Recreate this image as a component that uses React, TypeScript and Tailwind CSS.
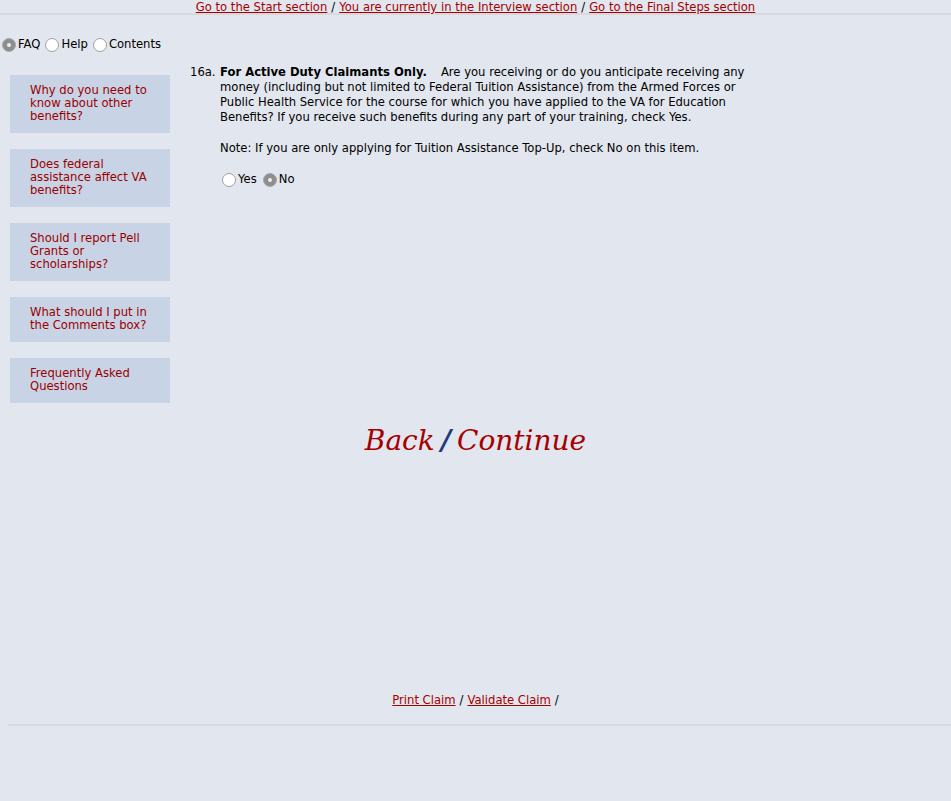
import { useState } from 'react'

const faqs = [
  'Why do you need to know about other benefits?',
  'Does federal assistance affect VA benefits?',
  'Should I report Pell Grants or scholarships?',
  'What should I put in the Comments box?',
  'Frequently Asked Questions',
]

const Radio = ({ checked }: { checked: boolean }) => (
  <span
    className={
      'inline-flex items-center justify-center w-[14px] h-[14px] rounded-full border ' +
      (checked ? 'bg-[#8e8e8e] border-[#a8a8a8]' : 'bg-white border-[#a0a0a0]')
    }
  >
    {checked && <span className="w-[4px] h-[4px] rounded-full bg-[#eeeeee]" />}
  </span>
)

export default function App() {
  const [panel, setPanel] = useState('FAQ')
  const [answer, setAnswer] = useState('No')

  return (
    <div className="min-h-[801px] bg-[#e2e6ee] text-[11.6px] text-black font-['DejaVu_Sans',sans-serif]">
      {/* Top section links */}
      <div className="flex justify-center h-[15px] leading-[14px] border-b-2 border-[#d6d9de]">
        <a href="#" className="text-[#a50000] underline">Go to the Start section</a>
        <span className="mx-[4px]">/</span>
        <a href="#" className="text-[#a50000] underline">You are currently in the Interview section</a>
        <span className="mx-[4px]">/</span>
        <a href="#" className="text-[#a50000] underline">Go to the Final Steps section</a>
      </div>

      <div className="flex">
        {/* Sidebar */}
        <div className="w-[180px] shrink-0">
          <div className="flex items-center mt-[22px] ml-[2px] h-[16px]">
            {['FAQ', 'Help', 'Contents'].map((p) => (
              <label key={p} className="flex items-center mr-[5px] cursor-pointer" onClick={() => setPanel(p)}>
                <Radio checked={panel === p} />
                <span className="ml-[2px]">{p}</span>
              </label>
            ))}
          </div>
          <div className="flex flex-col gap-[16px] mt-[22px] ml-[10px]">
            {faqs.map((q) => (
              <div key={q} className="w-[160px] bg-[#c8d3e5] pl-[20px] pr-[14px] pt-[9px] pb-[10px] leading-[13px]">
                <a href="#" className="text-[#9b0000]">{q}</a>
              </div>
            ))}
          </div>
        </div>

        {/* Question */}
        <div className="flex-1 pl-[10px] pt-[50px]">
          <div className="flex leading-[15px] w-[560px]">
            <span className="w-[30px] shrink-0">16a.</span>
            <div>
              <p>
                <b className="mr-[14px]">For Active Duty Claimants Only.</b>
                Are you receiving or do you anticipate receiving any money (including but not limited to Federal
                Tuition Assistance) from the Armed Forces or Public Health Service for the course for which you have
                applied to the VA for Education Benefits? If you receive such benefits during any part of your
                training, check Yes.
              </p>
              <p className="mt-[16px]">Note: If you are only applying for Tuition Assistance Top-Up, check No on this item.</p>
              <div className="flex items-center mt-[16px] ml-[2px]">
                {['Yes', 'No'].map((o) => (
                  <label key={o} className="flex items-center mr-[6px] cursor-pointer" onClick={() => setAnswer(o)}>
                    <Radio checked={answer === o} />
                    <span className="ml-[2px]">{o}</span>
                  </label>
                ))}
              </div>
            </div>
          </div>
        </div>
      </div>

      {/* Back / Continue */}
      <div className="flex justify-center mt-[21px] h-[34px] leading-[34px] italic text-[28px] font-['DejaVu_Serif',serif]">
        <a href="#" className="text-[#a50000]">Back</a>
        <span className="mx-[6px] text-[#1f3a7a] font-bold">/</span>
        <a href="#" className="text-[#a50000]">Continue</a>
      </div>

      {/* Footer links */}
      <div className="flex justify-center mt-[235px] leading-[14px]">
        <a href="#" className="text-[#a50000] underline">Print Claim</a>
        <span className="mx-[4px]">/</span>
        <a href="#" className="text-[#a50000] underline">Validate Claim</a>
        <span className="ml-[4px]">/</span>
      </div>

      <div className="mt-[17px] ml-[8px] border-t-2 border-[#d6d9de]" />
    </div>
  )
}
